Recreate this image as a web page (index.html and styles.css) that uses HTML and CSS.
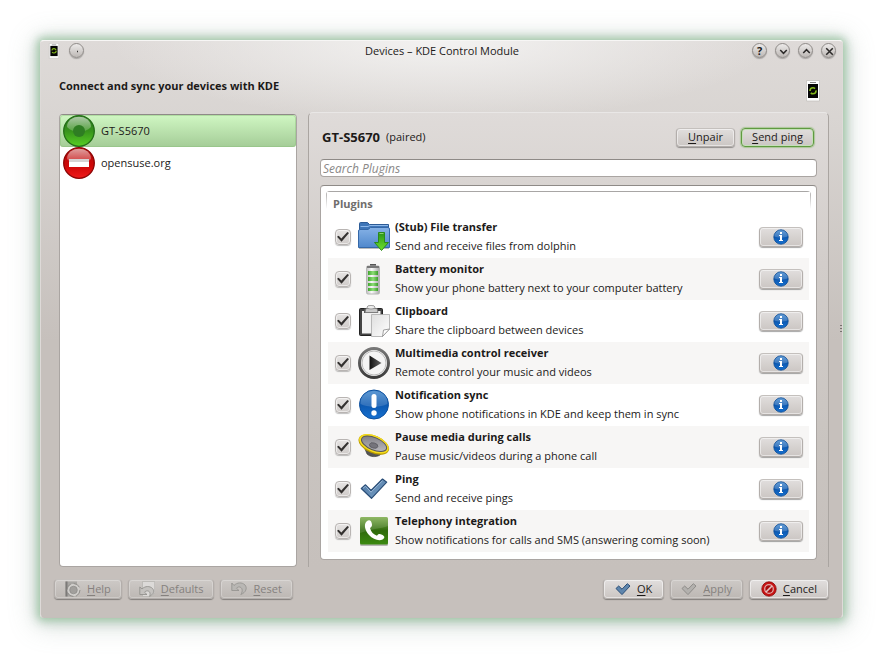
FILE: index.html
```html
<!DOCTYPE html>
<html lang="en">
<head>
<meta charset="utf-8">
<title>Devices – KDE Control Module</title>
<link rel="stylesheet" href="styles.css">
</head>
<body>
<svg class="defs" aria-hidden="true">
  <defs>
    <linearGradient id="g-green" x1="0" y1="0" x2="0" y2="1"><stop offset="0" stop-color="#2f7a20"/><stop offset=".5" stop-color="#37931c"/><stop offset="1" stop-color="#58cf24"/></linearGradient>
    <linearGradient id="g-red" x1="0" y1="0" x2="0" y2="1"><stop offset="0" stop-color="#b00d0d"/><stop offset=".6" stop-color="#cf0808"/><stop offset="1" stop-color="#f01a1a"/></linearGradient>
    <linearGradient id="g-gloss" x1="0" y1="0" x2="0" y2="1"><stop offset="0" stop-color="#fff" stop-opacity=".6"/><stop offset="1" stop-color="#fff" stop-opacity=".15"/></linearGradient>
    <linearGradient id="g-blue" x1="0" y1="0" x2="0" y2="1"><stop offset="0" stop-color="#3f86cc"/><stop offset=".5" stop-color="#0c58b0"/><stop offset="1" stop-color="#1670cf"/></linearGradient>
    <linearGradient id="g-folder" x1="0" y1="0" x2="0" y2="1"><stop offset="0" stop-color="#86b2e6"/><stop offset="1" stop-color="#5088cc"/></linearGradient>
    <linearGradient id="g-arrow" x1="0" y1="0" x2="0" y2="1"><stop offset="0" stop-color="#2a9418"/><stop offset="1" stop-color="#6fe22c"/></linearGradient>
    <linearGradient id="g-metal" x1="0" y1="0" x2="1" y2="0"><stop offset="0" stop-color="#bdbdbd"/><stop offset=".4" stop-color="#fafafa"/><stop offset="1" stop-color="#a8a8a8"/></linearGradient>
    <linearGradient id="g-cell" x1="0" y1="0" x2="1" y2="0"><stop offset="0" stop-color="#3fa62c"/><stop offset=".5" stop-color="#8fdd78"/><stop offset="1" stop-color="#3c9e2a"/></linearGradient>
    <linearGradient id="g-paper" x1="0" y1="0" x2="1" y2="1"><stop offset="0" stop-color="#dedede"/><stop offset="1" stop-color="#fff"/></linearGradient>
    <linearGradient id="g-ring" x1="0" y1="0" x2="0" y2="1"><stop offset="0" stop-color="#777"/><stop offset="1" stop-color="#3c3c3c"/></linearGradient>
    <linearGradient id="g-play" x1="0" y1="0" x2="1" y2="0"><stop offset="0" stop-color="#111"/><stop offset="1" stop-color="#666"/></linearGradient>
    <linearGradient id="g-cone" x1="0" y1="0" x2="1" y2="1"><stop offset="0" stop-color="#77767c"/><stop offset="1" stop-color="#c4c3c8"/></linearGradient>
    <linearGradient id="g-tick" x1="0" y1="0" x2="1" y2="1"><stop offset="0" stop-color="#4672a0"/><stop offset="1" stop-color="#7fa4c8"/></linearGradient>
    <linearGradient id="g-phone" x1="0" y1="0" x2="0" y2="1"><stop offset="0" stop-color="#7fae4e"/><stop offset=".5" stop-color="#2f6a0c"/><stop offset="1" stop-color="#3c8a10"/></linearGradient>

    <symbol id="i-device" viewBox="0 0 14 22">
      <path d="M.5 .5h13v20.500h-13z" fill="#fff" stroke="#c4c1be" stroke-width=".8"/>
      <path d="M4 2.500h6" stroke="#888" stroke-width="1"/>
      <path d="M2 4h10v14h-10z" fill="#050505"/>
      <circle cx="7" cy="10.800" r="3" fill="none" stroke="#83b81a" stroke-width="1.600" stroke-dasharray="7 2"/>
    </symbol>
    <symbol id="i-online" viewBox="0 0 32 32">
      <circle cx="16" cy="16" r="15.300" fill="url(#g-green)" stroke="#236e17" stroke-width="1.300"/>
      <path d="M4 12C4 5 10 1.800 16 1.800S28 5 28 12C25 15.500 20 17 16 17S7 15.500 4 12z" fill="url(#g-gloss)"/>
      <circle cx="16" cy="16" r="6" fill="#2f7d23"/>
    </symbol>
    <symbol id="i-offline" viewBox="0 0 32 32">
      <circle cx="16" cy="16" r="15.300" fill="url(#g-red)" stroke="#8d0505" stroke-width="1.300"/>
      <path d="M4 12C4 5 10 1.800 16 1.800S28 5 28 12C25 15.500 20 17 16 17S7 15.500 4 12z" fill="url(#g-gloss)"/>
      <path d="M6 12h20v8H6z" fill="#fff"/><path d="M6 12h20v3H6z" fill="#d6d4d4"/>
    </symbol>
    <symbol id="i-folder" viewBox="0 0 32 32">
      <path d="M1.500 4V2.500Q1.500 1.500 2.500 1.500H9.500L11.500 3.500H30.500V9H1.500z" fill="#3f76b8" stroke="#2c5b96" stroke-width="1"/>
      <path d="M2.500 5.500H10L12 4.500H30" fill="none" stroke="#8db8ea" stroke-width="1"/>
      <path d="M.5 10Q.5 8.500 2 8.500H10L12.500 6.500H30Q31.500 6.500 31.500 8V26.500H.5z" fill="url(#g-folder)" stroke="#3568a8" stroke-width="1"/>
      <path d="M1 27.500h30" stroke="#777" stroke-opacity=".5"/>
      <path d="M20.500 11.500h6v10h4L23.500 29.500 16.500 21.500h4z" fill="url(#g-arrow)" stroke="#2a8a1a" stroke-width="1"/>
      <path d="M21.500 12.500h4" stroke="#8ad070" stroke-width="1"/>
    </symbol>
    <symbol id="i-battery" viewBox="0 0 32 32">
      <path d="M12 1h6v3h-6z" fill="#555"/>
      <rect x="8.500" y="3" width="13" height="28" rx="1.500" fill="url(#g-metal)" stroke="#b5b5b5" stroke-width="1"/>
      <path d="M9 3h12v2H9z" fill="#777"/>
      <path d="M10 8h10v4H10zM10 14h10v4H10zM10 20h10v3H10zM10 25h10v3H10z" fill="url(#g-cell)"/>
    </symbol>
    <symbol id="i-clip" viewBox="0 0 32 32">
      <rect x="1.500" y="3.500" width="23" height="27" rx="1" fill="#444" stroke="#222"/>
      <path d="M4 6h18.500v22.500H4z" fill="#f1f1f1"/>
      <path d="M6 3.500h14v4.500H6z" fill="#555"/>
      <path d="M8 3.500h11l1 4H7z" fill="#c9c9c9" stroke="#777" stroke-width=".7"/>
      <ellipse cx="13" cy="2.200" rx="4" ry="1.800" fill="#eee" stroke="#888" stroke-width=".8"/>
      <path d="M13.500 9.500h18V24l-7 7.500h-11z" fill="url(#g-paper)" stroke="#aaa" stroke-width=".8"/>
      <path d="M31.500 24l-7 7.500 1-6.500z" fill="#fff" stroke="#888" stroke-width=".8"/>
    </symbol>
    <symbol id="i-play" viewBox="0 0 32 32">
      <circle cx="16" cy="16" r="14.500" fill="#f4f4f4" stroke="url(#g-ring)" stroke-width="3"/>
      <circle cx="16" cy="16" r="12" fill="none" stroke="#bbb" stroke-width="1"/>
      <path d="M11.500 8.500L23.500 16 11.500 23z" fill="url(#g-play)"/>
    </symbol>
    <symbol id="i-alert" viewBox="0 0 32 32">
      <circle cx="16" cy="15.500" r="14.500" fill="url(#g-blue)" stroke="#0b4f9e" stroke-width="1"/>
      <path d="M2.500 15C2 7 8.500 2 16 2S30 7 29.500 15C22 18.500 10 18.500 2.500 15z" fill="#fff" fill-opacity=".17"/>
      <rect x="13.500" y="5" width="5" height="14" rx="2.500" fill="#fff"/>
      <circle cx="16" cy="24" r="2.700" fill="#fff"/>
    </symbol>
    <symbol id="i-speaker" viewBox="0 0 32 32">
      <path d="M7 18l2 5c3 3 9 3.500 13 1l2-5z" fill="#555" stroke="#333" stroke-width=".6"/>
      <ellipse cx="16" cy="13.500" rx="16.200" ry="8.800" transform="rotate(23 16 13)" fill="#b89a00"/>
      <ellipse cx="16" cy="12.800" rx="15.700" ry="8.200" transform="rotate(23 16 12.500)" fill="#f5dc1c"/>
      <ellipse cx="16" cy="12.800" rx="13.400" ry="6.200" transform="rotate(23 16 13)" fill="url(#g-cone)" stroke="#55555a" stroke-width="1"/>
      <ellipse cx="15.500" cy="14.500" rx="4.300" ry="2.600" transform="rotate(15 15.500 15)" fill="#75747b" stroke="#55555b" stroke-width=".7"/>
    </symbol>
    <symbol id="i-tick" viewBox="0 0 32 32">
      <path d="M3.300 15.500L7.500 11.800 13 17.500 24.500 6 28.700 9.200 13.500 25.300z" fill="url(#g-tick)" stroke="#294d77" stroke-width="1.200" stroke-linejoin="round"/>
      <path d="M5 15.300L7.500 13.200 13 19.200 24.600 7.600" fill="none" stroke="#a4c1de" stroke-width=".9"/>
    </symbol>
    <symbol id="i-smalltick" viewBox="0 0 16 16">
      <path d="M1 7.500L3.700 5 7 8.200 12.300 2.700 15 5 7 13.600z" fill="#5f86ad" stroke="#294d77" stroke-width="1" stroke-linejoin="round"/>
    </symbol>
    <symbol id="i-graytick" viewBox="0 0 16 16">
      <path d="M1 7.500L3.700 5 7 8.200 12.300 2.700 15 5 7 13.600z" fill="#b3b1ae" stroke="#8f8d8a" stroke-width="1" stroke-linejoin="round"/>
    </symbol>
    <symbol id="i-phone" viewBox="0 0 32 32">
      <rect x="2" y="3" width="28" height="28" rx="1.500" fill="#9a9a9a" fill-opacity=".7"/>
      <rect x="2" y="2" width="28" height="27.500" rx="1.500" fill="url(#g-phone)"/>
      <path d="M2 3.500Q2 2 3.500 2h25Q30 2 30 3.500V11C22 14 16 13 2 18z" fill="#fff" fill-opacity=".13"/>
      <path d="M8.500 6.500C11 4.500 13 5 13.800 8.500C14.500 11 13.500 12 12 13C13 17 15.500 19.500 19 20.800C20 19 21.500 18.500 24 19.800C27 21.300 27 23 24.500 24.500C21 26.300 15 24.500 11 20C7 15.500 5.500 9.500 8.500 6.500z" fill="#fff"/>
    </symbol>
    <symbol id="i-info" viewBox="0 0 16 16">
      <circle cx="8" cy="8" r="7.200" fill="url(#g-blue)" stroke="#0a4a94" stroke-width=".8"/>
      <path d="M1.500 7.500C1.500 3.500 4.500 1.300 8 1.300s6.500 2.200 6.500 6.200C11 9 5 9 1.500 7.500z" fill="#fff" fill-opacity=".2"/>
      <path d="M7 3h2v2H7zM6 6h3v5h1v1H6v-1h1V7H6z" fill="#fff"/>
    </symbol>
    <symbol id="i-cancel" viewBox="0 0 16 16">
      <circle cx="8" cy="8" r="7.200" fill="#c81414" stroke="#8d0505" stroke-width=".8"/>
      <circle cx="8" cy="8" r="4.300" fill="#a80c0c" stroke="#e0a8a8" stroke-width="1.300"/>
      <path d="M5 11L11 5" stroke="#e6c0c0" stroke-width="1.600"/>
    </symbol>
    <symbol id="i-help" viewBox="0 0 16 16">
      <path d="M.5 .5H12V15.500H.5z" fill="#a8a6a3"/><path d="M.5 .5H2.500V15.500H.5z" fill="#7c7a78"/>
      <circle cx="8.500" cy="9" r="5" fill="#a19f9c" stroke="#cfcdca" stroke-width="2.400"/>
      <circle cx="8.500" cy="9" r="6.500" fill="none" stroke="#8b8986" stroke-width=".9" stroke-dasharray="7 3"/>
      <circle cx="8.500" cy="9" r="3.800" fill="none" stroke="#8b8986" stroke-width=".7"/>
    </symbol>
    <symbol id="i-defaults" viewBox="0 0 16 16">
      <path d="M3.500 .5H15.700V11.500L12.500 15.500H3.500z" fill="#dcdad8" stroke="#b3b1ae" stroke-width=".7"/>
      <path d="M.8 6V13.500H8L5.500 11.300C7 9.300 10 9.500 10.800 11.500C11.300 13 11 14.200 10.500 15.300C15 13.500 15.500 9.500 13.500 7.500C11 4.800 6 4.800 3 8z" fill="#c4c2bf" stroke="#8d8b88" stroke-width=".8"/>
    </symbol>
    <symbol id="i-reset" viewBox="0 0 16 16">
      <path d="M.8 2V9.500H8L5.500 7.300C7 5.300 10 5.500 11 8C11.500 10 11 12 9.800 13.500C15 11.500 16.500 7 14 4C11 1 6 1.300 3 4.500z" fill="#b9b7b4" stroke="#92908d" stroke-width=".8"/>
    </symbol>
  </defs>
</svg>

<main class="window">
  <header class="titlebar">
    <div class="tb-side">
      <svg class="app-icon"><use href="#i-device"/></svg>
      <button class="round" aria-label="Window menu"><svg viewBox="0 0 16 16"><path d="M7.500 8h1"/></svg></button>
    </div>
    <h1>Devices – KDE Control Module</h1>
    <div class="tb-side tb-right">
      <button class="round" aria-label="Help">?</button>
      <button class="round" aria-label="Minimize"><svg viewBox="0 0 16 16"><path d="M4.500 6.500L8 10l3.500-3.500"/></svg></button>
      <button class="round" aria-label="Maximize"><svg viewBox="0 0 16 16"><path d="M4.500 9.500L8 6l3.500 3.500"/></svg></button>
      <button class="round" aria-label="Close"><svg viewBox="0 0 16 16"><path d="M4.500 4.500l7 7M11.500 4.500l-7 7"/></svg></button>
    </div>
  </header>

  <div class="intro">
    <h2>Connect and sync your devices with KDE</h2>
    <svg class="intro-icon"><use href="#i-device"/></svg>
  </div>

  <div class="content">
    <ul class="devices">
      <li class="device selected"><svg><use href="#i-online"/></svg>GT-S5670</li>
      <li class="device"><svg><use href="#i-offline"/></svg>opensuse.org</li>
    </ul>

    <section class="panel">
      <div class="panel-head">
        <h3>GT-S5670</h3><span>(paired)</span>
        <button class="btn unpair"><span><u>U</u>npair</span></button>
        <button class="btn ping"><span><u>S</u>end ping</span></button>
      </div>
      <input class="search" type="text" placeholder="Search Plugins" aria-label="Search Plugins">
      <div class="plugins">
        <h4>Plugins</h4>
        <ul>
          <li class="plugin"><input type="checkbox" id="p1" checked><svg><use href="#i-folder"/></svg><label for="p1"><b>(Stub) File transfer</b><span>Send and receive files from dolphin</span></label><button class="btn info" aria-label="About File transfer"><svg><use href="#i-info"/></svg></button></li>
          <li class="plugin"><input type="checkbox" id="p2" checked><svg><use href="#i-battery"/></svg><label for="p2"><b>Battery monitor</b><span>Show your phone battery next to your computer battery</span></label><button class="btn info" aria-label="About Battery monitor"><svg><use href="#i-info"/></svg></button></li>
          <li class="plugin"><input type="checkbox" id="p3" checked><svg><use href="#i-clip"/></svg><label for="p3"><b>Clipboard</b><span>Share the clipboard between devices</span></label><button class="btn info" aria-label="About Clipboard"><svg><use href="#i-info"/></svg></button></li>
          <li class="plugin"><input type="checkbox" id="p4" checked><svg><use href="#i-play"/></svg><label for="p4"><b>Multimedia control receiver</b><span>Remote control your music and videos</span></label><button class="btn info" aria-label="About Multimedia control receiver"><svg><use href="#i-info"/></svg></button></li>
          <li class="plugin"><input type="checkbox" id="p5" checked><svg><use href="#i-alert"/></svg><label for="p5"><b>Notification sync</b><span>Show phone notifications in KDE and keep them in sync</span></label><button class="btn info" aria-label="About Notification sync"><svg><use href="#i-info"/></svg></button></li>
          <li class="plugin"><input type="checkbox" id="p6" checked><svg><use href="#i-speaker"/></svg><label for="p6"><b>Pause media during calls</b><span>Pause music/videos during a phone call</span></label><button class="btn info" aria-label="About Pause media during calls"><svg><use href="#i-info"/></svg></button></li>
          <li class="plugin"><input type="checkbox" id="p7" checked><svg><use href="#i-tick"/></svg><label for="p7"><b>Ping</b><span>Send and receive pings</span></label><button class="btn info" aria-label="About Ping"><svg><use href="#i-info"/></svg></button></li>
          <li class="plugin"><input type="checkbox" id="p8" checked><svg><use href="#i-phone"/></svg><label for="p8"><b>Telephony integration</b><span>Show notifications for calls and SMS (answering coming soon)</span></label><button class="btn info" aria-label="About Telephony integration"><svg><use href="#i-info"/></svg></button></li>
        </ul>
      </div>
    </section>
  </div>

  <footer class="actions">
    <button class="btn" disabled><svg><use href="#i-help"/></svg><span><u>H</u>elp</span></button>
    <button class="btn" disabled><svg><use href="#i-defaults"/></svg><span><u>D</u>efaults</span></button>
    <button class="btn" disabled><svg><use href="#i-reset"/></svg><span><u>R</u>eset</span></button>
    <button class="btn push"><svg><use href="#i-smalltick"/></svg><span><u>O</u>K</span></button>
    <button class="btn" disabled><svg><use href="#i-graytick"/></svg><span><u>A</u>pply</span></button>
    <button class="btn"><svg><use href="#i-cancel"/></svg><span><u>C</u>ancel</span></button>
  </footer>
  <div class="grip"></div>
</main>
</body>
</html>
```

FILE: styles.css
```css
* { box-sizing: border-box; }

body {
  margin: 0;
  min-height: 100vh;
  padding: 40px 40px 39px;
  display: flex;
  background: #fff;
  color: #1c1a19;
  font: 11px/16px "Open Sans", "Noto Sans", sans-serif;
}

h1, h2, h3, h4, ul { margin: 0; padding: 0; list-style: none; font-size: inherit; }
button, input { font: inherit; color: inherit; margin: 0; }
u { text-underline-offset: 2px; }
.defs { position: absolute; width: 0; height: 0; }

.window {
  position: relative;
  flex: 1;
  min-width: 0;
  display: flex;
  flex-direction: column;
  border: 1px solid #dedad8;
  border-top-color: #f7f6f5;
  border-bottom-color: #c5bfbb;
  border-radius: 4px;
  background:
    radial-gradient(ellipse 330px 80px at 50% 0, #f3f2f1, rgba(240, 239, 238, 0)) no-repeat,
    linear-gradient(#dedad8, #d8d4d1 90px, #c6c0bc 300px);
  box-shadow: 0 0 7px 2px rgba(145, 195, 150, .6), 0 1px 12px 4px rgba(130, 170, 145, .4), 0 3px 26px 6px rgba(140, 160, 150, .3);
}

.titlebar { display: flex; align-items: center; height: 19px; padding: 0 6px 0 7px; }
.titlebar h1 { font-weight: 400; }
.tb-side { flex: 1; display: flex; align-items: center; gap: 8px; }
.tb-right { justify-content: flex-end; }
.app-icon { width: 12px; height: 16px; margin-right: 1px; }
.round {
  width: 15px;
  height: 15px;
  padding: 0;
  display: grid;
  place-items: center;
  border: 1px solid #8f8b88;
  border-radius: 50%;
  background: linear-gradient(#eceae9, #bdb8b5);
  box-shadow: 0 1px 1px rgba(0, 0, 0, .25);
  font-weight: 700;
  line-height: 13px;
}
.round svg { width: 15px; height: 15px; fill: none; stroke: #2c2a29; stroke-width: 1.6; }

.intro { display: flex; justify-content: space-between; height: 54px; padding: 18px 22px 0 18px; }
.intro-icon { width: 14px; height: 22px; margin-top: 2px; }

.content { flex: 1; display: flex; gap: 11px; padding: 0 13px 0 18px; }
.devices {
  flex: 0 0 238px;
  border: 1px solid #aaa5a2;
  border-top-color: #8e8a87;
  border-radius: 4px;
  background: #fff;
}
.device { display: flex; align-items: center; gap: 6px; height: 32px; padding-left: 3px; }
.device svg { width: 32px; height: 32px; }
.selected { border-radius: 3px; background: linear-gradient(#d0f7c3, #a4cc97); box-shadow: inset 0 0 0 1px rgba(140, 190, 125, .45); }

.panel {
  flex: 1;
  min-width: 0;
  margin-top: -2px;
  padding: 14px 11px 7px;
  display: flex;
  flex-direction: column;
  border: 1px solid #aaa5a1;
  border-top-color: #e9e7e6;
  border-bottom: 0;
  border-radius: 5px 5px 0 0;
  background: linear-gradient(#dfdbd9, #d2cdca 150px, #c9c4c0 330px, #c6c0bc);
}
.panel-head { display: flex; align-items: center; gap: 6px; height: 20px; padding: 0 3px 0 2px; }
.panel-head h3 { font-size: 13px; }
.unpair { width: 59px; margin-left: auto; }
.ping { width: 73px; }

.btn {
  height: 20px;
  padding: 0 11px;
  display: flex;
  align-items: center;
  justify-content: center;
  gap: 6px;
  border: 1px solid #b3aeab;
  border-top-color: #c4c0bd;
  border-radius: 4px;
  background: linear-gradient(#e1dedd, #cbc6c3);
  box-shadow: inset 0 0 0 1px rgba(255, 255, 255, .5), 0 1px 1px rgba(0, 0, 0, .35);
  white-space: nowrap;
}
.btn svg { width: 16px; height: 16px; flex: none; }
.btn:disabled { padding: 0 10px; color: #85817e; background: linear-gradient(#cdc9c6, #bdb8b4); box-shadow: inset 0 0 0 1px rgba(255, 255, 255, .25), 0 1px 1px rgba(0, 0, 0, .35); }
.btn.unpair, .btn.ping { padding: 0; height: 19px; }
.btn.ping { border-color: #5f9a40; box-shadow: inset 0 0 0 1px #c5dfb8, 0 0 1px 1px rgba(120, 180, 90, .5); }

.search {
  width: 100%;
  height: 18px;
  margin: 12px 0 8px;
  padding: 0 2px;
  border: 1px solid #aaa5a2;
  border-top-color: #8e8a87;
  border-radius: 4px;
  background: #fff;
}
.search::placeholder { color: #8a8887; font-style: italic; font-size: 12px; opacity: 1; }

.plugins {
  flex: 1;
  padding: 5px 5px 6px;
  border: 1px solid #aaa5a2;
  border-top-color: #8e8a87;
  border-radius: 4px;
  background: #fff;
}
.plugins h4 {
  height: 25px;
  padding: 5px 7px;
  border-radius: 4px;
  background:
    linear-gradient(#a8a6a5, #fff 18px) left / 1px 100% no-repeat,
    linear-gradient(#a8a6a5, #fff 18px) right / 1px 100% no-repeat,
    linear-gradient(#a8a6a5, #a8a6a5) top / 100% 1px no-repeat;
  color: #706e6d;
}
.plugins ul { padding: 0 2px; }
.plugin { display: flex; align-items: center; height: 42px; padding: 0 6px 0 7px; }
.plugin:nth-child(even) { background: #f7f6f5; }
.plugin > svg { width: 32px; height: 32px; margin: 0 5px 0 7px; }
.plugin label { flex: 1; display: grid; gap: 3px; padding-bottom: 2px; }
.plugin input {
  appearance: none;
  width: 16px;
  height: 16px;
  border: 1px solid #b8b4b2;
  border-radius: 4px;
  background: linear-gradient(#e6e4e3, #d0ccca);
  box-shadow: inset 0 0 0 1px rgba(255, 255, 255, .55), 0 1px 1px rgba(0, 0, 0, .25);
}
.plugin input:checked::after {
  content: "";
  display: block;
  width: 12px;
  height: 10px;
  margin: 2px 1px;
  background: #333130;
  clip-path: polygon(0 47%, 14% 38%, 36% 64%, 86% 0, 100% 10%, 38% 98%);
}
.info { width: 44px; height: 20px; padding: 0; }

.actions { display: flex; gap: 6px; padding: 12px 13px 18px; }
.push { margin-left: auto; }

.grip {
  position: absolute;
  right: 0;
  top: 284px;
  width: 2px;
  height: 8px;
  background: repeating-linear-gradient(#77736f 0 1px, transparent 1px 3px);
}
```
